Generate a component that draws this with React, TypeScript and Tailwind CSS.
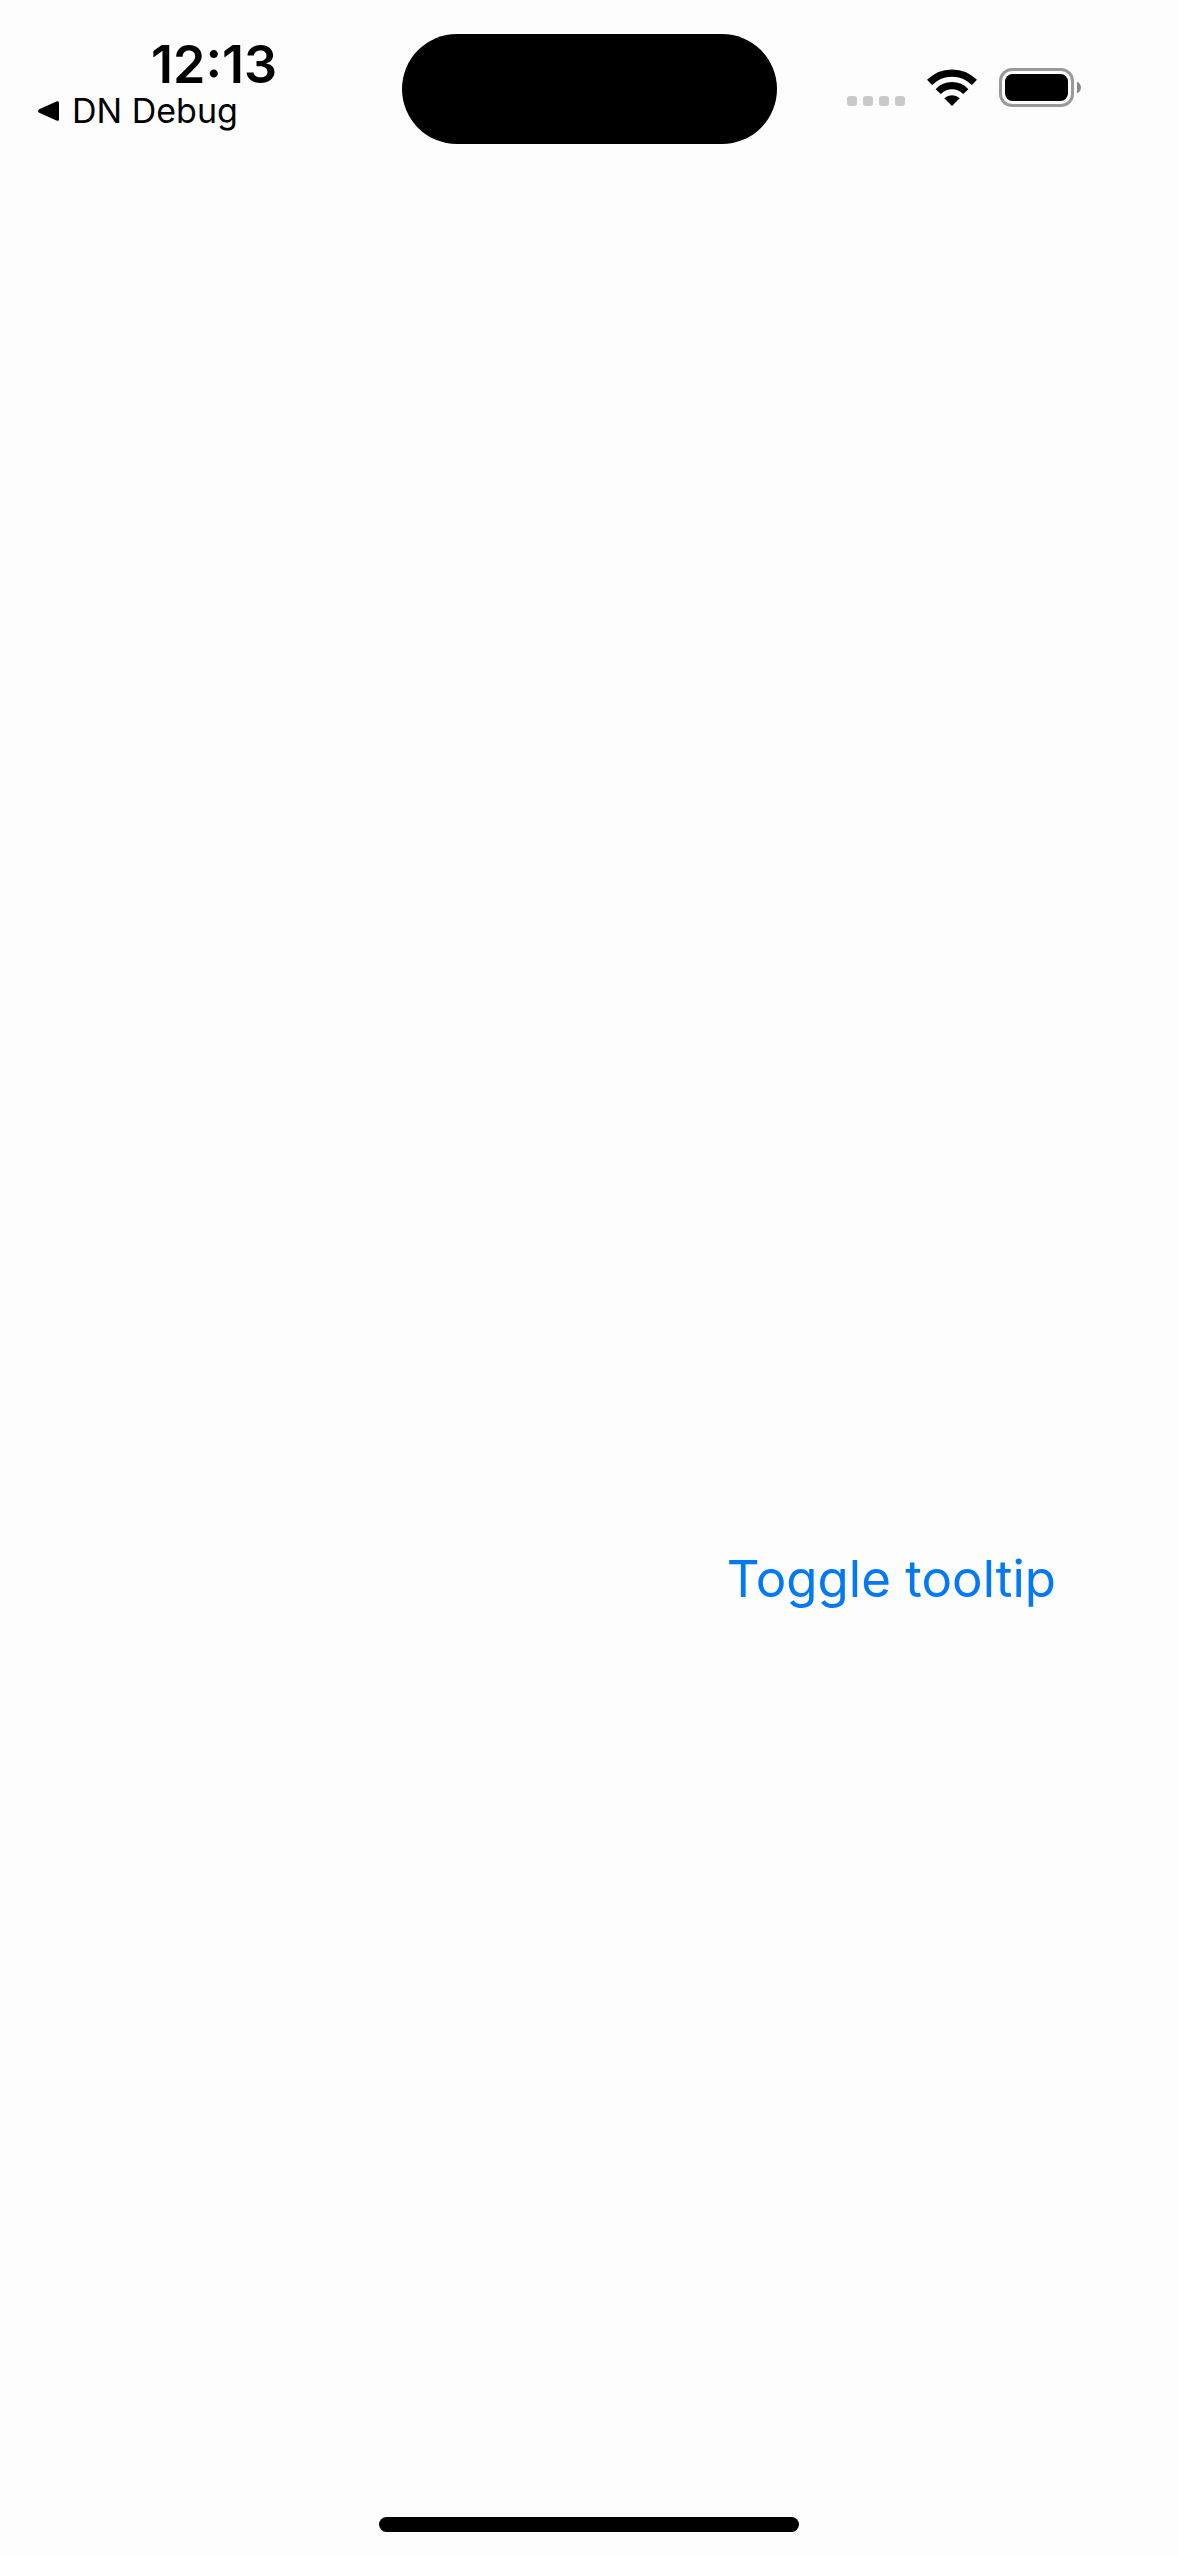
import { useState } from "react";

function BackLink() {
  return (
    <a href="#debug" className="flex items-center gap-3 self-start pl-[38px] text-[34px] leading-[30px] font-normal">
      <svg width="22" height="20" viewBox="0 0 22 20" fill="currentColor" aria-hidden="true">
        <path d="M1.200 8.300 18.500.400C20-.2 21 .4 21 1.800v16.400c0 1.500-1 2-2.500 1.400L1.200 11.700C-.4 10.900-.4 9.100 1.200 8.300Z" />
      </svg>
      DN Debug
    </a>
  );
}

function Signal() {
  return (
    <div className="mt-[26px] flex gap-[6px]" role="img" aria-label="No signal">
      <span className="size-[10px] rounded-[3px] bg-[#c9c9c9]" />
      <span className="size-[10px] rounded-[3px] bg-[#c9c9c9]" />
      <span className="size-[10px] rounded-[3px] bg-[#c9c9c9]" />
      <span className="size-[10px] rounded-[3px] bg-[#c9c9c9]" />
    </div>
  );
}

function Wifi() {
  return (
    <svg width="50" height="37" viewBox="0 0 50 37" role="img" aria-label="Wi-Fi">
      <g fill="none" stroke="#000" strokeWidth="7.200">
        <path d="M2.600 13.400A31.500 31.500 0 0 1 47.400 13.400" />
        <path d="M11.200 22.600A19 19 0 0 1 38.800 22.600" />
      </g>
      <path d="M17.300 29.200a11.200 11.200 0 0 1 15.400 0L25 37Z" />
    </svg>
  );
}

function Battery() {
  return (
    <svg width="83" height="39" viewBox="0 0 83 39" role="img" aria-label="Battery full">
      <rect x="1.500" y="1.500" width="72" height="36" rx="11.500" fill="none" stroke="#999" strokeWidth="3" />
      <rect x="6" y="6" width="63" height="27" rx="7.500" />
      <path d="M78 13.500c5.300 2.500 5.300 9.500 0 12Z" fill="#888" />
    </svg>
  );
}

export default function App() {
  const [open, setOpen] = useState(false);
  return (
    <div className="flex min-h-screen flex-col bg-[#fdfdfe] font-['Inter',sans-serif] text-black">
      <header className="grid grid-cols-[1fr_375px_1fr] pt-[34px]">
        <div className="flex flex-col">
          <time className="pl-[151px] text-[52px] leading-[62px] font-semibold">12:13</time>
          <BackLink />
        </div>
        <div className="h-[110px] rounded-full bg-black" />
        <div className="flex items-center justify-end gap-[22px] self-start pt-[34px] pr-[96px]">
          <Signal />
          <Wifi />
          <Battery />
        </div>
      </header>
      <main className="flex flex-1 flex-col items-end justify-center pt-[496px] pr-[122px]">
        <button
          type="button"
          aria-pressed={open}
          onClick={() => setOpen(!open)}
          className="text-[51px] leading-[64px] text-[#0479f6]"
        >
          Toggle tooltip
        </button>
      </main>
      <footer className="flex justify-center pb-6">
        <div className="h-[15px] w-[420px] rounded-full bg-black" />
      </footer>
    </div>
  );
}
